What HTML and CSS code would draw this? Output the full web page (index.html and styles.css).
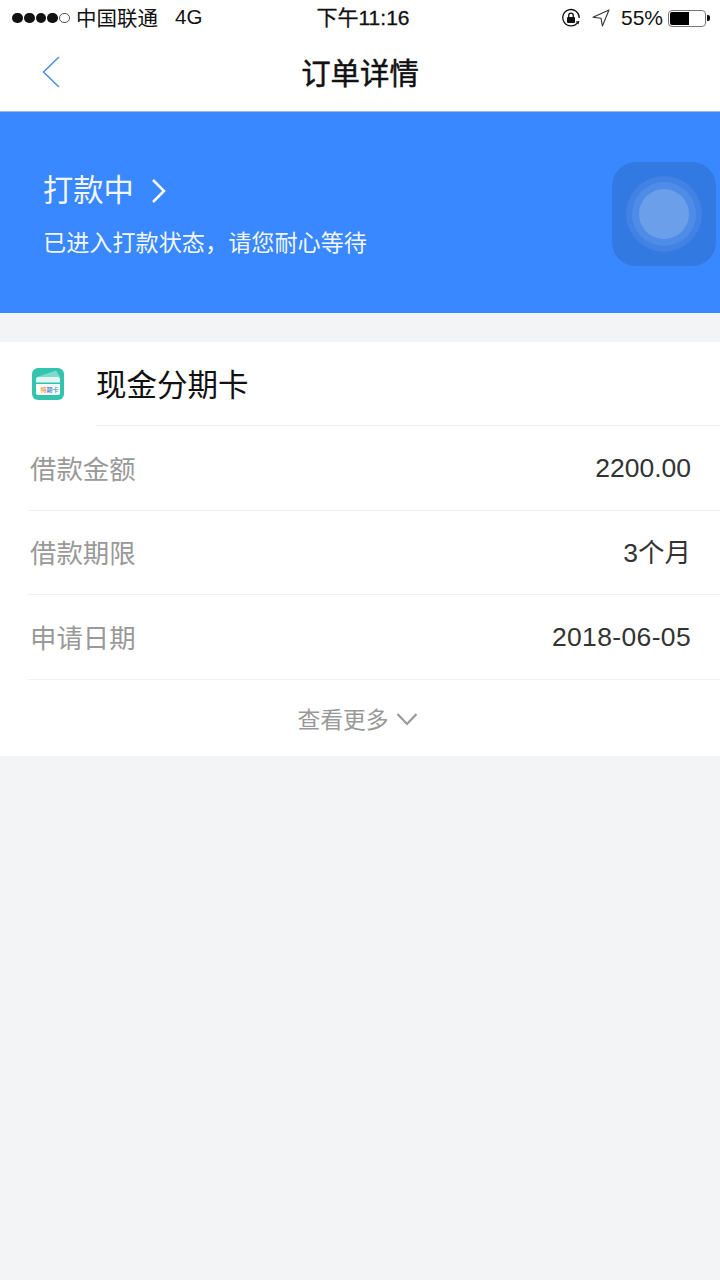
FILE: index.html
```html
<!DOCTYPE html>
<html>
<head>
<meta charset="UTF-8">
    <title>订单详情</title>
    <link rel="stylesheet" href="styles.css">
</head>
<body>
    <div class="statusbar">
        <div class="status-left">
            <span class="signal"><i></i><i></i><i></i><i></i><i class="off"></i></span>
            <span class="carrier">中国联通</span>
            <span class="network">4G</span>
        </div>
        <div class="status-time">下午11:16</div>
        <div class="status-right">
            <svg class="lock-icon" width="20" height="20" viewBox="0 0 20 20">
                <path d="M16.6 14.6A8.2 8.2 0 1 1 18.2 10" fill="none" stroke="#111" stroke-width="1.3"/>
                <path d="M14.8 13.4l3.6-.4-1 3.6z" fill="#111"/>
                <rect x="6" y="9" width="8" height="6" rx="1" fill="#111"/>
                <path d="M7.7 9V7.4a2.3 2.3 0 0 1 4.6 0V9" fill="none" stroke="#111" stroke-width="1.3"/>
            </svg>
            <svg class="location-icon" width="18" height="18" viewBox="0 0 18 18">
                <path d="M17 1L1 8.2l8 1 1.4 7.8z" fill="none" stroke="#333" stroke-width="1.1" stroke-linejoin="round"/>
            </svg>
            <span class="percent">55%</span>
            <span class="battery"><span class="battery-level"></span></span>
            <span class="battery-tip"></span>
        </div>
    </div>

    <div class="navbar">
        <svg class="back-icon" width="18" height="32" viewBox="0 0 18 32">
            <path d="M17 1L1.5 16 17 31" fill="none" stroke="#4a90e2" stroke-width="1.5"/>
        </svg>
        <h1>订单详情</h1>
    </div>

    <div class="banner">
        <div class="banner-text">
            <div class="banner-title">
                <span>打款中</span>
                <svg width="16" height="26" viewBox="0 0 16 26">
                    <path d="M3 2l11 11L3 24" fill="none" stroke="#fff" stroke-width="2.5"/>
                </svg>
            </div>
            <p>已进入打款状态，请您耐心等待</p>
        </div>
        <div class="banner-logo">
            <div class="ring-outer">
                <div class="ring-inner">
                    <div class="ring-core"></div>
                </div>
            </div>
        </div>
    </div>

    <div class="card">
        <div class="card-head">
            <svg class="card-icon" width="32" height="32" viewBox="0 0 32 32">
                <rect width="32" height="32" rx="6" fill="#34c4ae"/>
                <path d="M5 9L24 2.5 28 9z" fill="#7fdacd"/>
                <path d="M4 11a2 2 0 0 1 2-2h20a2 2 0 0 1 2 2v3.5H4z" fill="#e0f7f3"/>
                <path d="M4 16h24v9a2 2 0 0 1-2 2H6a2 2 0 0 1-2-2z" fill="#fff"/>
                <text class="icon-text" x="8.5" y="24" fill="#f0a050">特</text>
                <text class="icon-text" x="14.5" y="24" fill="#5b8fe0">期</text>
                <text class="icon-text" x="20.5" y="24" fill="#57b8a8">卡</text>
            </svg>
            <div class="card-title">现金分期卡</div>
        </div>
        <div class="row">
            <span class="label">借款金额</span>
            <span class="value">2200.00</span>
        </div>
        <div class="row">
            <span class="label">借款期限</span>
            <span class="value">3个月</span>
        </div>
        <div class="row">
            <span class="label">申请日期</span>
            <span class="value value-date">2018-06-05</span>
        </div>
        <div class="more">
            <span>查看更多</span>
            <svg width="22" height="14" viewBox="0 0 22 14">
                <path d="M1.5 2l9.5 10L20.5 2" fill="none" stroke="#999" stroke-width="2.2"/>
            </svg>
        </div>
    </div>
</body>
</html>
```

FILE: styles.css
```css
html, body { margin: 0; padding: 0; }
body { width: 720px; min-height: 1280px; background-color: #f3f4f6; font-family: "Liberation Sans", "Noto Sans CJK SC", sans-serif; color: #333; }

.statusbar { height: 40px; padding: 0 10px 4px 12px; box-sizing: border-box; background: white; color: #111; display: grid; grid-template-columns: 1fr auto 1fr; align-items: center; }
.status-left { display: flex; align-items: center; margin-top: -2px; font-size: 20.5px; }
.signal { display: flex; gap: 1px; margin: 2px 6px 0 0; }
.signal i { width: 10.8px; height: 10.8px; border-radius: 50%; background: #111; box-sizing: border-box; }
.signal i.off { background: none; border: 1px solid #555; }
.network { margin-left: 17px; }
.status-time { margin: -4px 0 0 4px; font-size: 21px; -webkit-text-stroke: 0.3px #111; white-space: nowrap; }
.status-right { display: flex; align-items: center; justify-content: flex-end; font-size: 21px; }
.lock-icon { margin-right: 11px; }
.location-icon { margin-right: 11px; }
.battery { width: 38px; height: 17px; border: 1px solid #777; border-radius: 4px; padding: 1px; box-sizing: border-box; margin-left: 5px; display: block; }
.battery-level { display: block; width: 55%; height: 100%; background: #000; border-radius: 2px 0 0 2px; }
.battery-tip { width: 3px; height: 6px; margin-left: 1px; background: #111; border-radius: 0 2px 2px 0; }

.navbar { height: 72px; padding-bottom: 10px; box-sizing: border-box; background: white; border-bottom: 1px solid #9db8d8; display: flex; justify-content: center; align-items: center; position: relative; }
.navbar h1 { margin: 0; font-size: 29.4px; font-weight: normal; -webkit-text-stroke: 0.5px #111; color: #111; }
.back-icon { position: absolute; left: 42px; top: 16px; }

.banner { height: 201px; padding: 4px 4px 0 43px; box-sizing: border-box; background-color: #3a88ff; color: rgba(255,255,255,0.95); display: flex; justify-content: space-between; align-items: center; }
.banner-title { display: flex; align-items: center; gap: 16px; font-size: 30.3px; line-height: 40px; }
.banner-text p { margin: 16px 0 0; font-size: 23.15px; line-height: 32px; }
.banner-logo { width: 104px; height: 104px; margin-top: -1px; border-radius: 24px; background: #3379e2; display: flex; justify-content: center; align-items: center; }
.ring-outer { width: 76px; height: 76px; border-radius: 50%; background: #4182e4; display: flex; justify-content: center; align-items: center; }
.ring-inner { width: 64px; height: 64px; border-radius: 50%; background: #4f8ce7; display: flex; justify-content: center; align-items: center; }
.ring-core { width: 50px; height: 50px; border-radius: 50%; background: #6c9fea; }

.card { margin-top: 29px; background: white; }
.card-head { height: 84px; display: flex; align-items: center; position: relative; }
.card-head::after { content: ""; position: absolute; left: 96px; right: 0; bottom: 0; height: 1px; background: #f0f1f3; }
.card-icon { margin-left: 32px; }
.icon-text { font-size: 6px; font-weight: bold; }
.card-title { margin: -2px 0 0 32px; font-size: 30.5px; color: #111; }
.row { height: 84.5px; margin-left: 28px; padding: 0 29px 1px 2px; border-bottom: 1px solid #f0f1f3; box-sizing: border-box; display: flex; justify-content: space-between; align-items: center; }
.label { font-size: 26.4px; color: #999; }
.value { font-size: 26.5px; line-height: 30px; padding-top: 2px; color: #333; }
.value-date { letter-spacing: 0.35px; }
.more { height: 76px; padding: 2px 5px 0 0; box-sizing: border-box; display: flex; justify-content: center; align-items: center; gap: 7px; font-size: 22.8px; color: #999; }
```
